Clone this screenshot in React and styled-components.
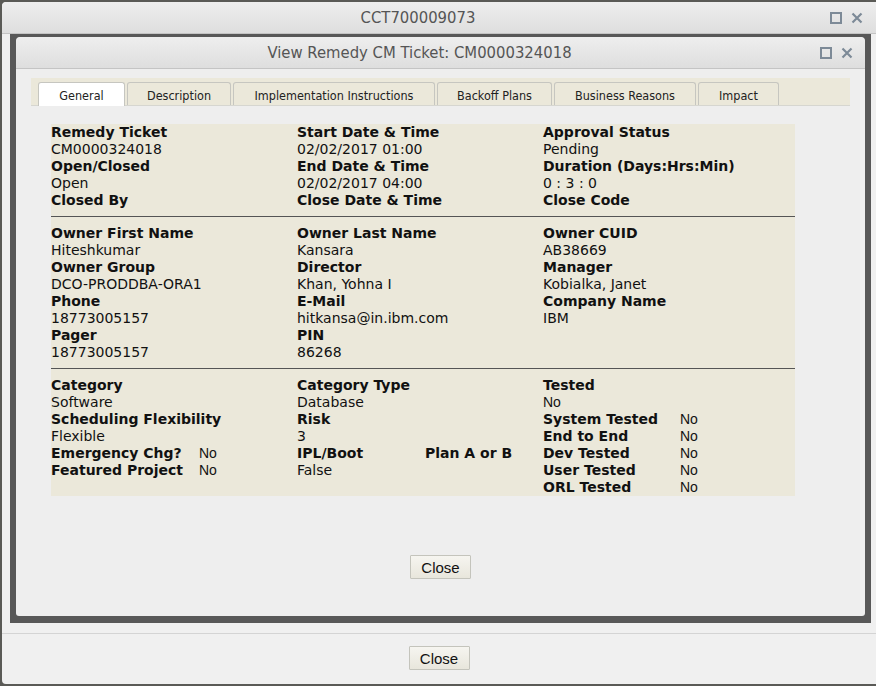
import React from "react";
import styled, { createGlobalStyle } from "styled-components";

const Global = createGlobalStyle`
  html, body { margin: 0; padding: 0; background: #5a5a56; }
  body { font-family: "DejaVu Sans", sans-serif; }
`;

const Window = styled.div`
  margin: 2px 0 0 2px;
  width: 874px;
  height: 682px;
  background: #f0f0f0;
  border-radius: 4px 0 0 4px;
  display: flex;
  flex-direction: column;
  overflow: hidden;
`;

const TitleBar = styled.div`
  position: relative;
  height: 32px;
  flex: none;
  box-sizing: border-box;
  padding-right: 42px;
  background: linear-gradient(#eeeeee, #dedede);
  border-bottom: 1px solid #c4c4c4;
  border-radius: ${(p) => (p.inner ? "4px 4px 0 0" : "4px 0 0 0")};
  display: flex;
  align-items: center;
  justify-content: center;
  font-family: "DejaVu Sans Condensed", "DejaVu Sans", sans-serif;
  font-size: 16.5px;
  color: #555;
`;

const Controls = styled.div`
  position: absolute;
  right: ${(p) => p.right}px;
  top: 10px;
  display: flex;
  gap: 9px;
`;

const Frame = styled.div`
  margin: 0 5px 0 8px;
  background: #585858;
  padding: 3px 6px 7px 6px;
  flex: none;
`;

const Dialog = styled.div`
  background: #eeeeee;
  border-radius: 5px 5px 3px 3px;
  height: 579px;
  display: flex;
  flex-direction: column;
`;

const DialogBody = styled.div`
  padding: 9px 15px 0 15px;
  flex: 1;
  display: flex;
  flex-direction: column;
`;

const TabStrip = styled.div`
  background: #ebe8da;
  height: 28px;
  box-sizing: border-box;
  padding: 4px 0 0 7px;
  display: flex;
  gap: 2px;
  border-bottom: 1px solid #d6d6d0;
`;

const Tab = styled.div`
  width: ${(p) => p.w}px;
  box-sizing: border-box;
  height: ${(p) => (p.active ? 24 : 23)}px;
  border: 1px solid #c6c6c0;
  border-bottom: none;
  border-radius: 3px 3px 0 0;
  background: ${(p) => (p.active ? "#ffffff" : "#ebe8da")};
  display: flex;
  align-items: center;
  justify-content: center;
  font-family: "DejaVu Sans Condensed", "DejaVu Sans", sans-serif;
  font-size: 12.5px;
  color: #222;
  padding-top: 2px;
`;

const Panel = styled.div`
  margin: 18px 0 0 20px;
  width: 744px;
  background: #ebe8da;
  color: #111;
  font-size: 14px;
`;

const Section = styled.div`
  display: grid;
  grid-template-columns: 246px 246px 252px;
  padding: ${(p) => p.pad};
  border-bottom: ${(p) => (p.last ? "none" : "1px solid #555")};
`;

const Col = styled.div`
  display: flex;
  flex-direction: column;
`;

const Label = styled.div`
  font-weight: bold;
  line-height: 17px;
  height: 17px;
  white-space: nowrap;
`;

const Value = styled.div`
  line-height: 17px;
  height: 17px;
  white-space: nowrap;
  font-family: ${(p) => (p.arial ? '"Liberation Sans", Arial, sans-serif' : '"DejaVu Sans", sans-serif')};
  font-size: 14px;
`;

const Pair = styled.div`
  display: grid;
  grid-template-columns: ${(p) => p.lw}px auto;
  line-height: 17px;
  height: 17px;
  white-space: nowrap;
`;

const ButtonRow = styled.div`
  display: flex;
  justify-content: center;
  padding-top: ${(p) => p.top}px;
`;

const Button = styled.button`
  width: 61px;
  height: 24px;
  box-sizing: border-box;
  border: 1px solid #c4c4bc;
  background: linear-gradient(#f6f5f0, #e8e6dc);
  font-family: "Liberation Sans", Arial, sans-serif;
  font-size: 15px;
  color: #111;
  padding: 0;
  border-radius: 1px;
`;

const Footer = styled.div`
  margin-top: 10px;
  border-top: 1px solid #d4d4d4;
  flex: 1;
  padding-top: 12px;
  display: flex;
  justify-content: center;
  align-items: flex-start;
`;

const WinIcons = () => (
  <>
    <svg width="12" height="12" viewBox="0 0 12 12">
      <rect x="1" y="1" width="10" height="10" fill="none" stroke="#7d8a97" strokeWidth="2" />
    </svg>
    <svg width="12" height="12" viewBox="0 0 12 12">
      <path d="M1.5 1.5 L10.5 10.5 M10.5 1.5 L1.5 10.5" stroke="#7d8a97" strokeWidth="2.2" />
    </svg>
  </>
);

const tabs = [
  ["General", 87, true],
  ["Description", 104],
  ["Implementation Instructions", 202],
  ["Backoff Plans", 115],
  ["Business Reasons", 142],
  ["Impact", 81],
];

const renderItem = (it, i) => {
  if (it.l) return <Label key={i}>{it.l}</Label>;
  if (it.p)
    return (
      <Pair key={i} lw={it.w}>
        <Label>{it.p}</Label>
        {it.lab2 ? <Label>{it.lab2}</Label> : <Value arial={it.arial}>{it.v}</Value>}
      </Pair>
    );
  return (
    <Value key={i} arial={it.arial}>
      {it.v}
    </Value>
  );
};

const sections = [
  {
    pad: "0 0 7px 0",
    cols: [
      [{ l: "Remedy Ticket" }, { v: "CM0000324018" }, { l: "Open/Closed" }, { v: "Open" }, { l: "Closed By" }],
      [{ l: "Start Date & Time" }, { v: "02/02/2017 01:00" }, { l: "End Date & Time" }, { v: "02/02/2017 04:00" }, { l: "Close Date & Time" }],
      [{ l: "Approval Status" }, { v: "Pending" }, { l: "Duration (Days:Hrs:Min)" }, { v: "0 : 3 : 0" }, { l: "Close Code" }],
    ],
  },
  {
    pad: "8px 0 7px 0",
    cols: [
      [{ l: "Owner First Name" }, { v: "Hiteshkumar" }, { l: "Owner Group" }, { v: "DCO-PRODDBA-ORA1" }, { l: "Phone" }, { v: "18773005157" }, { l: "Pager" }, { v: "18773005157" }],
      [{ l: "Owner Last Name" }, { v: "Kansara" }, { l: "Director" }, { v: "Khan, Yohna I" }, { l: "E-Mail" }, { v: "hitkansa@in.ibm.com" }, { l: "PIN" }, { v: "86268" }],
      [{ l: "Owner CUID" }, { v: "AB38669" }, { l: "Manager" }, { v: "Kobialka, Janet" }, { l: "Company Name" }, { v: "IBM" }],
    ],
  },
  {
    pad: "8px 0 0 0",
    last: true,
    cols: [
      [
        { l: "Category" },
        { v: "Software" },
        { l: "Scheduling Flexibility" },
        { v: "Flexible" },
        { p: "Emergency Chg?", v: "No", w: 148, arial: true },
        { p: "Featured Project", v: "No", w: 148, arial: true },
      ],
      [
        { l: "Category Type" },
        { v: "Database" },
        { l: "Risk" },
        { v: "3" },
        { p: "IPL/Boot", lab2: "Plan A or B", w: 128 },
        { v: "False" },
      ],
      [
        { l: "Tested" },
        { v: "No", arial: true },
        { p: "System Tested", v: "No", w: 137, arial: true },
        { p: "End to End", v: "No", w: 137, arial: true },
        { p: "Dev Tested", v: "No", w: 137, arial: true },
        { p: "User Tested", v: "No", w: 137, arial: true },
        { p: "ORL Tested", v: "No", w: 137, arial: true },
      ],
    ],
  },
];

export default function App() {
  return (
    <>
      <Global />
      <Window>
        <TitleBar>
          CCT700009073
          <Controls right={13}>
            <WinIcons />
          </Controls>
        </TitleBar>
        <Frame>
          <Dialog>
            <TitleBar inner>
              View Remedy CM Ticket: CM0000324018
              <Controls right={12}>
                <WinIcons />
              </Controls>
            </TitleBar>
            <DialogBody>
              <TabStrip>
                {tabs.map(([t, w, a]) => (
                  <Tab key={t} w={w} active={a}>
                    {t}
                  </Tab>
                ))}
              </TabStrip>
              <Panel>
                {sections.map((s, si) => (
                  <Section key={si} pad={s.pad} last={s.last}>
                    {s.cols.map((c, ci) => (
                      <Col key={ci}>{c.map((it, i) => renderItem(it, i))}</Col>
                    ))}
                  </Section>
                ))}
              </Panel>
              <ButtonRow top={59}>
                <Button>Close</Button>
              </ButtonRow>
            </DialogBody>
          </Dialog>
        </Frame>
        <Footer>
          <Button>Close</Button>
        </Footer>
      </Window>
    </>
  );
}
